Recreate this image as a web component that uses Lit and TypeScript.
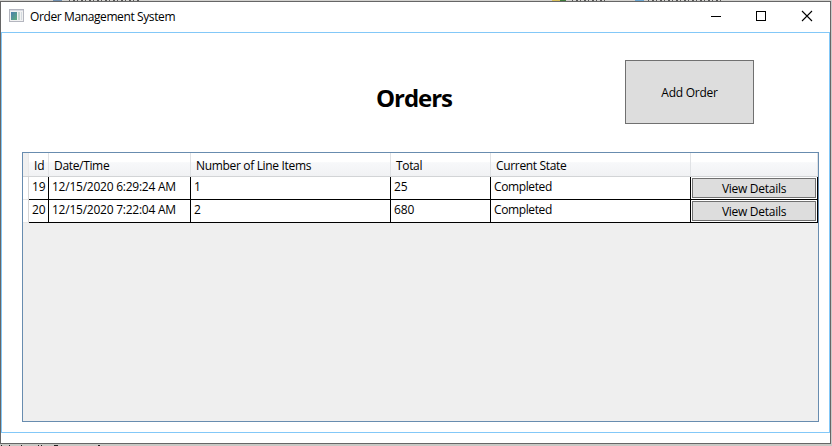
import { LitElement, html, css } from "lit";
import { customElement, property } from "lit/decorators.js";

interface Order {
  id: number;
  date: string;
  items: number;
  total: number;
  state: string;
}

const ORDERS: Order[] = [
  { id: 19, date: "12/15/2020 6:29:24 AM", items: 1, total: 25, state: "Completed" },
  { id: 20, date: "12/15/2020 7:22:04 AM", items: 2, total: 680, state: "Completed" },
];

@customElement("title-bar")
class TitleBar extends LitElement {
  static styles = css`
    :host { display: flex; height: 30px; align-items: center; flex: none; }
    .icon { margin: 0 6px 3px 8px; display: block; }
    .title { flex: 1; font-size: 12px; letter-spacing: -0.39px; white-space: nowrap; padding-bottom: 2px; }
    .controls { display: flex; }
    .control { width: 45px; height: 30px; display: block; }
    .close { width: 47px; }
  `;
  render() {
    return html`
      <svg class="icon" width="15" height="13" viewBox="0 0 15 13" shape-rendering="crispEdges">
        <defs>
          <linearGradient id="g" x1="0" y1="0" x2="1" y2="1">
            <stop offset="0" stop-color="#4a7fae" /><stop offset="1" stop-color="#5fae7c" />
          </linearGradient>
        </defs>
        <rect x="0.5" y="0.5" width="14" height="12" fill="#f2f2f2" stroke="#b4b6bf" />
        <rect x="1" y="1" width="13" height="1" fill="#d8dae2" />
        <rect x="2" y="3" width="6" height="8" fill="url(#g)" />
        <rect x="9" y="3" width="2" height="8" fill="#c6d8d2" />
        <rect x="12" y="3" width="1" height="8" fill="#d3dadf" />
      </svg>
      <span class="title">Order Management System</span>
      <span class="controls">
        <svg class="control" viewBox="0 0 45 30"><path d="M18 14.5h10" stroke="#000" /></svg>
        <svg class="control" viewBox="0 0 45 30"><rect x="18.5" y="9.5" width="9" height="9" fill="none" stroke="#000" /></svg>
        <svg class="control close" viewBox="0 0 47 30"><path d="M19 9l10 10M29 9l-10 10" stroke="#000" stroke-width="1.1" /></svg>
      </span>
    `;
  }
}

@customElement("order-grid")
class OrderGrid extends LitElement {
  @property({ attribute: false }) orders: Order[] = [];
  static styles = css`
    :host { display: block; box-sizing: border-box; border: 1px solid #688caf; background: #efefef; font-size: 12px; }
    .row { display: grid; grid-template-columns: 6px 20px 142px 200px 100px 200px 127px; background: #fff; }
    .row > * { box-sizing: border-box; white-space: nowrap; overflow: hidden; }
    .head { height: 24px; border-bottom: 1px solid #d2d4d6; box-sizing: border-box;
      background: linear-gradient(#fff 0, #fff 38%, #f7f8fa 42%, #f1f2f4 100%); }
    .head > * { border-right: 1px solid #e0e2e5; padding-left: 5px; line-height: 25px; }
    .head > .corner { background: #f0f0f0; padding: 0; border-color: #e8e8e8; }
    .data { height: 23px; }
    .data > * { border-right: 1px solid #000; border-bottom: 1px solid #000; padding-left: 3px; line-height: 20px; }
    .data > .marker { border-right-color: #d5d5d5; border-bottom-color: #e6e6e6; padding: 0; }
    .data > .action { padding: 1px; display: flex; }
    button { flex: 1; font: inherit; color: #000; background: #ddd; border: 1px solid #707070; padding: 0; line-height: 19px; letter-spacing: -0.28px; }
    .date { letter-spacing: -0.24px; }
    .state { letter-spacing: -0.38px; }
    .t { letter-spacing: -0.15px; }
    .h { letter-spacing: -0.33px; }
  `;
  render() {
    return html`
      <div class="row head">
        <span class="corner"></span><span class="t">Id</span><span class="h">Date/Time</span>
        <span class="h">Number of Line Items</span><span class="h">Total</span><span class="h">Current State</span><span></span>
      </div>
      ${this.orders.map(
        (o) => html`<div class="row data">
          <span class="marker"></span><span class="t">${o.id}</span><span class="date">${o.date}</span>
          <span class="t">${o.items}</span><span class="t">${o.total}</span><span class="state">${o.state}</span>
          <span class="action"><button>View Details</button></span>
        </div>`
      )}
    `;
  }
}

@customElement("app-root")
class AppRoot extends LitElement {
  static styles = css`
    :host { display: flex; flex-direction: column; width: 832px; height: 446px; overflow: hidden;
      background: #c9c9c9; color: #000; font-family: "Open Sans", "Noto Sans", sans-serif; font-size: 12px; }
    .behind, .below { display: block; flex: none; }
    .window { box-sizing: border-box; width: 831px; height: 443px; flex: none; display: flex; flex-direction: column;
      border: 1px solid #666; background: #fff; }
    .client { box-sizing: border-box; height: 401px; border: 1px solid #83c8f8; }
    .top { display: flex; height: 119px; justify-content: flex-end; }
    h1 { margin: 47px 0 0; width: 249px; font-size: 24px; line-height: 36px; font-weight: 700; letter-spacing: -1.05px; }
    .add { width: 129px; height: 64px; margin: 27px 75px 0 0; font: inherit; color: #000; background: #ddd;
      border: 1px solid #707070; padding: 0; letter-spacing: -0.25px; }
    order-grid { margin-left: 20px; width: 797px; height: 270px; }
  `;
  render() {
    return html`
      <svg class="behind" width="832" height="1" viewBox="0 0 832 1">
        <rect width="832" height="1" fill="#d3d2cf" />
        <path d="M53 .5h9" stroke="#6f8fb0" />
        <path d="M69 .5h71" stroke="#555" stroke-dasharray="1 3 2 2" />
        <path d="M552 .5h8" stroke="#d8c05c" /><path d="M560 .5h6" stroke="#3d7a3a" />
        <path d="M572 .5h35" stroke="#555" stroke-dasharray="1 3 2 2" />
        <path d="M635 .5h9" stroke="#6aa5d0" />
        <path d="M648 .5h76" stroke="#555" stroke-dasharray="1 3 2 2" />
      </svg>
      <main class="window">
        <title-bar></title-bar>
        <section class="client">
          <div class="top">
            <h1>Orders</h1>
            <button class="add">Add Order</button>
          </div>
          <order-grid .orders=${ORDERS}></order-grid>
        </section>
      </main>
      <svg class="below" width="832" height="2" viewBox="0 0 832 2">
        <rect width="832" height="2" fill="#c8c8c4" />
        <path d="M1 1.5h1M9 1.5h1M21 1.5h1M38 1.5h1M41 1.5h1M54 1.5h4M98 1.5h2" stroke="#222" />
      </svg>
    `;
  }
}
